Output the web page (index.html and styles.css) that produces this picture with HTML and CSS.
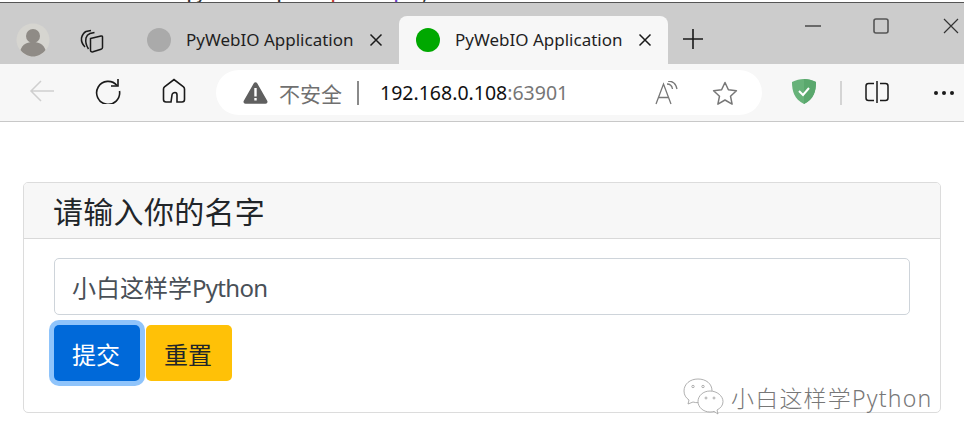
FILE: index.html

```html
<!DOCTYPE html>
<html lang="zh-CN">
<head>
  <meta charset="UTF-8">
  <title>PyWebIO Application</title>
  <link rel="stylesheet" href="styles.css">
</head>
<body>
  <div class="code-strip">
    <span class="code-text"><span class="c-red">from</span> pywebio.input <span class="c-red">import</span> <span class="c-purple">input</span>, TEXT</span>
  </div>

  <div class="tabbar">
    <svg class="avatar" width="34" height="34" viewBox="0 0 34 34">
      <circle cx="17" cy="17" r="16.5" fill="#d6d5d0"/>
      <circle cx="17" cy="13" r="7" fill="#8f8b86"/>
      <path d="M4.5 27c2-6 7-8 12.500-8s10.500 2 12.500 8c-3 4-8 6.500-12.500 6.500S7.500 31 4.500 27z" fill="#8f8b86"/>
    </svg>
    <svg class="collections" width="26" height="26" viewBox="0 0 26 26" fill="none" stroke="#1a1a1a" stroke-width="1.500">
      <path d="M6 19c-2-2-4-5-3.500-9C3 8 4 5 7 3.500L12 2.500"/>
      <path d="M9.500 21C7.500 18 6 15 7 10c.5-2 1.500-3.500 4-4.500l4.500-1"/>
      <path d="M11.500 10.500 22 8c1-.2 1.500.3 1.500 1v10.500c0 1-.5 1.500-1.500 1.800l-8 2.500c-1.500.4-2.500-.3-2.500-1.500z"/>
    </svg>
    <div class="tab">
      <span class="favicon favicon-off"></span>
      <span class="tab-title">PyWebIO Application</span>
      <svg class="tab-close" width="14" height="14" viewBox="0 0 14 14" stroke="#1a1a1a" stroke-width="1.500"><path d="M1.500 1.500l11 11M12.500 1.500l-11 11"/></svg>
    </div>
    <div class="tab tab-active">
      <span class="favicon favicon-on"></span>
      <span class="tab-title">PyWebIO Application</span>
      <svg class="tab-close" width="14" height="14" viewBox="0 0 14 14" stroke="#1a1a1a" stroke-width="1.500"><path d="M1.500 1.500l11 11M12.500 1.500l-11 11"/></svg>
    </div>
    <svg class="new-tab" width="22" height="22" viewBox="0 0 22 22" stroke="#1a1a1a" stroke-width="1.600"><path d="M11 1v20M1 11h20"/></svg>
    <div class="window-btns">
      <svg width="16" height="16" viewBox="0 0 16 16" stroke="#333" stroke-width="1.300"><path d="M0 8h16"/></svg>
      <svg width="16" height="16" viewBox="0 0 16 16" fill="none" stroke="#555" stroke-width="1.600"><rect x="1" y="1" width="14" height="14" rx="2"/></svg>
      <svg width="16" height="16" viewBox="0 0 16 16" stroke="#333" stroke-width="1.200"><path d="M1 1l14 14M15 1L1 15"/></svg>
    </div>
  </div>

  <div class="toolbar">
    <svg class="tool tool-back" width="26" height="26" viewBox="0 0 26 26" fill="none" stroke="#cfcfcf" stroke-width="1.500"><path d="M25 13H2M12 3 2 13l10 10"/></svg>
    <svg class="tool tool-reload" width="26" height="26" viewBox="0 0 26 26" fill="none" stroke="#1a1a1a" stroke-width="1.600"><path d="M22 7.500A11.500 11.500 0 1 0 24.500 13"/><path d="M23 1v7h-7"/></svg>
    <svg class="tool tool-home" width="24" height="26" viewBox="0 0 24 26" fill="none" stroke="#1a1a1a" stroke-width="1.600"><path d="M9 24H4c-1.500 0-2.500-1-2.500-2.500V11c0-1 .3-1.600 1-2.200L12 1.500l9.500 7.300c.7.600 1 1.200 1 2.200v10.500c0 1.500-1 2.500-2.500 2.500h-5v-7c0-1.500-1-2.500-2-2.500s-3 1-3 2.500z"/></svg>
    <div class="address">
      <svg class="warn" width="25" height="22" viewBox="0 0 25 22"><path d="M10.800 1.200c.8-1.400 2.600-1.400 3.400 0l10 17.500c.8 1.400-.1 3.100-1.700 3.100H2.500c-1.600 0-2.500-1.700-1.700-3.100z" fill="#5f5f5f"/><path d="M11.300 6h2.400v8.500h-2.400zM11.300 16h2.400v2.500h-2.400z" fill="#fff"/></svg>
      <span class="insecure">不安全</span>
      <span class="addr-sep"></span>
      <span class="url">192.168.0.108<span class="url-port">:63901</span></span>
      <svg class="read-aloud" width="24" height="24" viewBox="0 0 24 24" fill="none" stroke="#777" stroke-width="1.300"><path d="M1 23 8.500 3 16 23M3.500 16.500h10"/><path d="M12 3c3 0 5 2 5.500 5M13 0c4.500 0 8 3 9 8"/></svg>
      <svg class="star" width="26" height="24" viewBox="0 0 26 24" fill="none" stroke="#777" stroke-width="1.500"><path d="M13 1.500l3.400 7.300 8 1-5.900 5.400 1.600 7.900L13 19l-7.100 4.100 1.600-7.900-5.900-5.400 8-1z" stroke-linejoin="round"/></svg>
    </div>
    <svg class="shield" width="24" height="25" viewBox="0 0 24 25"><path d="M12 0c4 0 8 1 12 3 0 9-2 17-12 22C2 20 0 12 0 3c4-2 8-3 12-3z" fill="#67b279"/><path d="M12 0c4 0 8 1 12 3 0 9-2 17-12 22z" fill="#5aa86d"/><path d="M7 12l4 4 6-7" fill="none" stroke="#fff" stroke-width="2"/></svg>
    <span class="tool-sep"></span>
    <svg class="split" width="24" height="24" viewBox="0 0 24 24" fill="none" stroke="#1a1a1a" stroke-width="1.500"><path d="M9 3.500H3.500C2 3.500 1 4.500 1 6v12c0 1.500 1 2.500 2.500 2.500H9M15 3.500h5.500C22 3.500 23 4.500 23 6v12c0 1.500-1 2.500-2.500 2.500H15M12 1v22"/></svg>
    <span class="more"><i></i><i></i><i></i></span>
  </div>

  <div class="page">
    <div class="card">
      <div class="card-header">请输入你的名字</div>
      <div class="card-body">
        <div class="field">小白这样学<span class="latin">Python</span></div>
        <div class="actions">
          <button class="btn btn-submit">提交</button>
          <button class="btn btn-reset">重置</button>
        </div>
      </div>
    </div>
  </div>

  <div class="watermark">
    <svg width="42" height="37" viewBox="0 0 42 37" fill="#fff" stroke="#9c9c9c" stroke-width="0.800">
      <path d="M15 1C7 1 1 6 1 13c0 4 2 7 5 9l-1 4 5-2c2 .5 3 .7 5 .7 8 0 14-5 14-12S23 1 15 1z"/>
      <path d="M27 13c-7 0-12 5-12 10.500S20 34 27 34c1.500 0 3-.2 4-.6l4 2.600-1-4c4-2 6-5 6-8.500C40 18 34 13 27 13z"/>
      <circle cx="10" cy="8.500" r="1.200"/><circle cx="20" cy="8.500" r="1.200"/>
      <circle cx="23" cy="20" r="1"/><circle cx="31" cy="20" r="1"/>
    </svg>
    <span>小白这样学Python</span>
  </div>
</body>
</html>
```

FILE: styles.css

```css
html, body {
  margin: 0;
  height: 444px;
  overflow: hidden;
  background: #fff;
}
body {
  font-family: "Noto Sans", "Noto Sans CJK SC", sans-serif;
  color: #212529;
}

.code-strip {
  height: 2px;
  overflow: hidden;
  background: #fff;
  border-bottom: 1px solid #555;
  padding-left: 142px;
}
.code-text {
  display: block;
  margin-top: -13px;
  font-family: "Liberation Mono", monospace;
  font-size: 15px;
  line-height: 20px;
  font-weight: bold;
  color: #333;
  white-space: pre;
}
.c-red { color: #c0392b; }
.c-purple { color: #6a3fc4; }

.tabbar {
  height: 61px;
  background: #cccccc;
  display: flex;
  align-items: flex-end;
}
.avatar {
  margin: 0 0 7px 16px;
  flex: none;
}
.collections {
  margin: 0 0 10px 29px;
  flex: none;
}
.tab {
  width: 269px;
  height: 48px;
  display: flex;
  align-items: center;
  box-sizing: border-box;
  padding-left: 17px;
  border-radius: 8px 8px 0 0;
  flex: none;
}
.tabbar > .tab:first-of-type { margin-left: 25px; }
.tab-active {
  background: #f7f7f7;
}
.favicon {
  width: 24px;
  height: 24px;
  border-radius: 50%;
  flex: none;
}
.favicon-off { background: #aaaaaa; }
.favicon-on { background: #00a800; }
.tab-title {
  margin-left: 15px;
  padding-bottom: 2px;
  font-size: 17px;
  color: #1f1f1f;
  width: 169px;
  white-space: nowrap;
  flex: none;
}
.tab-close {
  margin-left: 14px;
  flex: none;
}
.new-tab {
  margin: 0 0 14px 14px;
  flex: none;
}
.window-btns {
  align-self: flex-start;
  margin: 15px 0 0 101px;
  display: flex;
  gap: 52px;
}
.window-btns svg { display: block; }
.window-btns svg:last-child { margin-left: 2px; }

.toolbar {
  height: 57px;
  background: #f7f7f7;
  border-bottom: 1px solid #c8c8c8;
  display: flex;
  align-items: center;
}
.tool { flex: none; margin-bottom: 3px; }
.tool-back { margin-left: 29px; }
.tool-reload { margin-left: 40px; }
.tool-home { margin-left: 41px; }
.address {
  margin-left: 30px;
  width: 546px;
  height: 45px;
  border-radius: 23px;
  background: #fff;
  display: flex;
  align-items: center;
  box-sizing: border-box;
  padding-left: 27px;
  flex: none;
}
.warn { flex: none; }
.insecure {
  margin-left: 11px;
  font-size: 21px;
  color: #707070;
  width: 63px;
  white-space: nowrap;
}
.addr-sep {
  width: 2px;
  height: 24px;
  background: #8a8a8a;
  margin-left: 15px;
}
.url {
  margin-left: 21px;
  padding-bottom: 1px;
  font-size: 19.500px;
  color: #111;
  width: 188px;
  white-space: nowrap;
}
.url-port { color: #767676; }
.read-aloud { margin-left: 87px; flex: none; }
.star { margin-left: 33px; flex: none; }
.shield { margin-left: 30px; flex: none; margin-bottom: 2px; }
.tool-sep {
  width: 2px;
  height: 24px;
  background: #d4d4d4;
  margin-left: 24px;
}
.split { margin-left: 23px; flex: none; margin-bottom: 2px; }
.more {
  margin-left: 45px;
  display: flex;
  gap: 4px;
}
.more i {
  width: 4px;
  height: 4px;
  border-radius: 50%;
  background: #1a1a1a;
}

.page {
  padding: 60px 23px 0;
}
.card {
  width: 918px;
  height: 231px;
  box-sizing: border-box;
  border: 1px solid #dcdcdc;
  border-radius: 5px;
}
.card-header {
  height: 56px;
  box-sizing: border-box;
  background: #f7f7f7;
  border-bottom: 1px solid #d9d9d9;
  border-radius: 4px 4px 0 0;
  padding-left: 29px;
  font-size: 30px;
  letter-spacing: 0.300px;
  line-height: 58px;
}
.card-body {
  padding: 19px 30px 0;
}
.field {
  width: 856px;
  height: 57px;
  box-sizing: border-box;
  border: 1px solid #ced4da;
  border-radius: 5px;
  padding-left: 17px;
  font-size: 24px;
  line-height: 58px;
  color: #495057;
}
.latin { letter-spacing: -0.7px; }
.actions {
  margin-top: 10px;
  display: flex;
  gap: 6px;
}
.btn {
  width: 86px;
  height: 56px;
  border: none;
  border-radius: 5px;
  padding: 0 2px 0 0;
  font-family: inherit;
  font-size: 24px;
}
.btn-submit {
  background: #0069d9;
  color: #fff;
  box-shadow: 0 0 0 5px #8fc4fb;
}
.btn-reset {
  background: #ffc107;
  color: #212529;
}

.watermark {
  position: absolute;
  left: 683px;
  top: 378px;
  display: flex;
  align-items: center;
  gap: 6px;
  font-size: 23px;
  letter-spacing: 1.200px;
  color: #777;
  font-weight: 300;
  white-space: nowrap;
}
.watermark svg { flex: none; }
```
